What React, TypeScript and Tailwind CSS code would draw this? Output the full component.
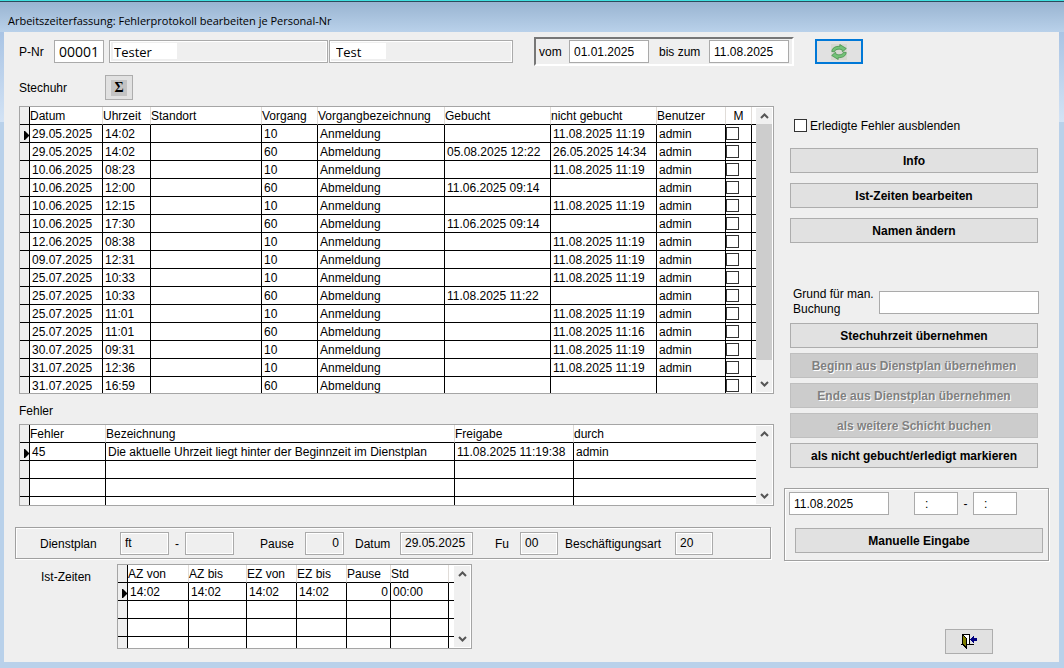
import type { ReactNode } from "react";

type Column = {
  title: string;
  width: string;
  align?: string;
};

type Cell = string | boolean;

const bookingColumns: Column[] = [
  { title: "Datum", width: "w-[73px]" },
  { title: "Uhrzeit", width: "w-[48px]" },
  { title: "Standort", width: "w-[111px]" },
  { title: "Vorgang", width: "w-[56px]" },
  { title: "Vorgangbezeichnung", width: "w-[127px]" },
  { title: "Gebucht", width: "w-[106px]" },
  { title: "nicht gebucht", width: "w-[106px]" },
  { title: "Benutzer", width: "w-[69px]" },
  { title: "M", width: "w-[26px]" },
  { title: "", width: "" },
];

// date, time, code, booked, not booked, user
const bookings = [
  ["29.05.2025", "14:02", "10", "", "11.08.2025 11:19", "admin"],
  ["29.05.2025", "14:02", "60", "05.08.2025 12:22", "26.05.2025 14:34", "admin"],
  ["10.06.2025", "08:23", "10", "", "11.08.2025 11:19", "admin"],
  ["10.06.2025", "12:00", "60", "11.06.2025 09:14", "", "admin"],
  ["10.06.2025", "12:15", "10", "", "11.08.2025 11:19", "admin"],
  ["10.06.2025", "17:30", "60", "11.06.2025 09:14", "", "admin"],
  ["12.06.2025", "08:38", "10", "", "11.08.2025 11:19", "admin"],
  ["09.07.2025", "12:31", "10", "", "11.08.2025 11:19", "admin"],
  ["25.07.2025", "10:33", "10", "", "11.08.2025 11:19", "admin"],
  ["25.07.2025", "10:33", "60", "11.08.2025 11:22", "", "admin"],
  ["25.07.2025", "11:01", "10", "", "11.08.2025 11:19", "admin"],
  ["25.07.2025", "11:01", "60", "", "11.08.2025 11:16", "admin"],
  ["30.07.2025", "09:31", "10", "", "11.08.2025 11:19", "admin"],
  ["31.07.2025", "12:36", "10", "", "11.08.2025 11:19", "admin"],
  ["31.07.2025", "16:59", "60", "", "", ""],
];

const bookingRows: Cell[][] = bookings.map(([date, time, code, booked, open, user]) => [
  date,
  time,
  "",
  code,
  code === "10" ? "Anmeldung" : "Abmeldung",
  booked,
  open,
  user,
  false,
  "",
]);

const errorColumns: Column[] = [
  { title: "Fehler", width: "w-[76px]" },
  { title: "Bezeichnung", width: "w-[349px]" },
  { title: "Freigabe", width: "w-[119px]" },
  { title: "durch", width: "" },
];

const errorRows: Cell[][] = [
  ["45", "Die aktuelle Uhrzeit liegt hinter der Beginnzeit im Dienstplan", "11.08.2025 11:19:38", "admin"],
  ["", "", "", ""],
  ["", "", "", ""],
  ["", "", "", ""],
];

const actualColumns: Column[] = [
  { title: "AZ von", width: "w-[61px]" },
  { title: "AZ bis", width: "w-[58px]" },
  { title: "EZ von", width: "w-[50px]" },
  { title: "EZ bis", width: "w-[50px]" },
  { title: "Pause", width: "w-[44px]", align: "text-right pr-[2px]" },
  { title: "Std", width: "w-[58px]" },
  { title: "", width: "" },
];

const actualRows: Cell[][] = [
  ["14:02", "14:02", "14:02", "14:02", "0", "00:00", ""],
  ["", "", "", "", "", "", ""],
  ["", "", "", "", "", "", ""],
  ["", "", "", "", "", "", ""],
];

function Chevron({ down = false }: { down?: boolean }) {
  return (
    <svg viewBox="0 0 9 6" className="w-[9px] h-[6px]" fill="none" stroke="#555" strokeWidth="2">
      <path d={down ? "M1 1 L4.5 4.5 L8 1" : "M1 5 L4.5 1.5 L8 5"} />
    </svg>
  );
}

function ScrollBar({ thumb = false }: { thumb?: boolean }) {
  return (
    <div className="flex w-[17px] shrink-0 flex-col border-y border-r border-white bg-[#f0f0f0]">
      <button type="button" aria-label="Nach oben" className="flex h-4 items-center justify-center">
        <Chevron />
      </button>
      <div className="flex-1 pb-4">{thumb && <div className="h-full bg-[#cdcdcd]" />}</div>
      <button type="button" aria-label="Nach unten" className="flex h-4 items-center justify-center">
        <Chevron down />
      </button>
    </div>
  );
}

function Grid({
  label,
  columns,
  rows,
  height,
  thumb,
}: {
  label: string;
  columns: Column[];
  rows: Cell[][];
  height: string;
  thumb?: boolean;
}) {
  return (
    <div className={`flex overflow-hidden border border-[#a5a5a5] bg-white ${height}`}>
      <table aria-label={label} className="w-full min-w-0 flex-1 table-fixed border-separate border-spacing-0 self-start leading-4">
        <thead>
          <tr>
            <th className="h-[18px] w-[10px] border-r border-b border-black bg-[#efefef] p-0" />
            {columns.map((col, i) => (
              <th
                key={i}
                className={`h-[18px] border-b border-b-black p-0 pt-px font-normal whitespace-nowrap ${col.width} ${
                  i < columns.length - 1 ? "border-r border-r-[#e0dcd8]" : ""
                } ${col.title === "M" ? "text-center" : "text-left"}`}
              >
                {col.title}
              </th>
            ))}
          </tr>
        </thead>
        <tbody>
          {rows.map((row, r) => (
            <tr key={r}>
              <td className="h-[18px] border-r border-b border-black bg-[#efefef] p-0">
                {r === 0 && (
                  <svg viewBox="0 0 5 9" className="mt-[3px] ml-auto h-[9px] w-[5px]">
                    <path d="M0 0h1l4 4v1L1 9H0z" />
                  </svg>
                )}
              </td>
              {row.map((cell, c) => (
                <td
                  key={c}
                  className={`h-[18px] border-b border-black p-0 whitespace-nowrap ${
                    c < row.length - 1 ? "border-r" : ""
                  } ${typeof cell === "string" ? "pt-px pl-[2px]" : ""} ${columns[c].align ?? ""}`}
                >
                  {typeof cell === "string" ? (
                    cell
                  ) : (
                    <input
                      type="checkbox"
                      aria-label={`M Zeile ${r + 1}`}
                      className="block size-[13px] appearance-none border border-[#333] bg-white"
                    />
                  )}
                </td>
              ))}
            </tr>
          ))}
        </tbody>
      </table>
      <ScrollBar thumb={thumb} />
    </div>
  );
}

function TextBox({ id, value, className = "", label }: { id: string; value?: string; className?: string; label?: string }) {
  return (
    <input
      id={id}
      type="text"
      aria-label={label}
      defaultValue={value}
      className={`h-[23px] shrink-0 border border-[#aaa] px-1 outline-none ${className}`}
    />
  );
}

// read-only look: grey with a thin white inner edge
const flat = "bg-[#efefef] shadow-[inset_0_0_0_1px_white]";

function PushButton({ children, disabled = false }: { children: ReactNode; disabled?: boolean }) {
  return (
    <button
      type="button"
      disabled={disabled}
      className="h-[25px] w-[248px] border border-[#adadad] bg-[#e1e1e1] pt-[2px] font-bold disabled:border-[#bfbfbf] disabled:bg-[#ccc] disabled:text-[#808080] disabled:[text-shadow:1px_1px_0_white]"
    >
      {children}
    </button>
  );
}

function RefreshIcon() {
  return (
    <svg viewBox="0 0 16 16" className="size-4 bg-[#d6d8d0]">
      <g fill="#74c277" stroke="#3c8a44" strokeWidth="0.7" strokeLinejoin="round">
        <path d="M.8 7.500C1 4 4.500 2 8.800 2.400V.5L15.300 4.500 11.500 7.800 10.800 5.600C7 4.600 4.300 5.300 3.300 7.800z" />
        <path d="M15.200 8.500C15 12 11.500 14 7.200 13.600v1.900L.7 11.500 4.500 8.200l.7 2.200c3.800 1 6.500.3 7.500-2.200z" />
      </g>
    </svg>
  );
}

function ExitIcon() {
  return (
    <svg viewBox="0 0 16 16" className="size-4" shapeRendering="crispEdges">
      <path d="M1 0h8v11H1z" fill="#000" />
      <path d="M0 10h13v1H0z" fill="#000" />
      <path d="M2 1h6v9H2z" fill="#fff" />
      <path d="M1 0l5 4v11H5l-4-4z" fill="#000" />
      <path d="M2 2l3 3v8l-3-3z" fill="#808000" />
      <path d="M9 5h1V4h1V3h1V2h1v2h3v3h-3v2h-1V8h-1V7h-1V6H9z" fill="#000080" />
    </svg>
  );
}

export default function App() {
  return (
    <div className="flex min-h-screen flex-col bg-[linear-gradient(#a9c4e4_32px,#d3e3f5_122px,#b9d1ea_122px)] font-['Liberation_Sans',Arial,sans-serif] text-[12px] leading-[15px] text-black">
      {/* TITLE BAR */}
      <header className="border-t border-[#40e0e0]">
        <div className="flex h-[31px] items-center border-t border-[#2c4a5c] bg-linear-to-b from-[#99b4d1] to-[#b9d1ea] px-2 pt-[7px]">
          <h1 className="font-['Open_Sans',sans-serif] text-[11px]">
            Arbeitszeiterfassung: Fehlerprotokoll bearbeiten je Personal-Nr
          </h1>
        </div>
      </header>

      <main className="mr-[5px] mb-[6px] ml-1 flex flex-1 flex-col bg-[#efefef] pr-[10px] pl-[11px]">
        {/* PERSON AND PERIOD */}
        <div className="mt-[5px] ml-1 flex h-[29px] items-center">
          <label htmlFor="pnr" className="w-[35px] pt-[2px]">P-Nr</label>
          <TextBox id="pnr" value="00001" className="w-[50px] bg-white font-['Open_Sans',sans-serif] text-[14px]" />
          <TextBox
            id="nachname"
            label="Nachname"
            value="Tester"
            className="ml-[5px] w-[219px] bg-[#efefef] bg-[linear-gradient(white,white)] bg-[length:64px_16px] bg-[position:3px_2px] bg-no-repeat font-['Open_Sans',sans-serif] text-[13px] shadow-[inset_0_0_0_1px_white]"
          />
          <TextBox
            id="vorname"
            label="Vorname"
            value="Test"
            className="ml-px w-[184px] bg-[#efefef] bg-[linear-gradient(white,white)] bg-[length:56px_16px] bg-[position:0px_2px] bg-no-repeat pl-[6px] font-['Open_Sans',sans-serif] text-[13px] shadow-[inset_0_0_0_1px_white]"
          />
          <div className="ml-[21px] flex h-[29px] items-center border-2 border-t-[#777] border-r-white border-b-white border-l-[#777] pr-[3px] pl-[3px]">
            <label htmlFor="vom" className="w-[30px] pt-[2px]">vom</label>
            <TextBox id="vom" value="01.01.2025" className="w-[80px] bg-white" />
            <label htmlFor="bis" className="w-[60px] pt-[2px] pl-[10px]">bis zum</label>
            <TextBox id="bis" value="11.08.2025" className="w-[80px] bg-white" />
          </div>
          <button
            type="button"
            aria-label="Aktualisieren"
            className="ml-[21px] flex h-[25px] w-12 items-center justify-center border-2 border-[#0078d7] bg-[#e1e1e1]"
          >
            <RefreshIcon />
          </button>
        </div>

        <div className="flex flex-1 gap-[10px]">
          {/* LEFT COLUMN */}
          <div className="min-w-0 flex-1">
            <div className="ml-1">
              <div className="flex items-center pt-[9px] pb-[6px]">
                <h2 className="w-[86px] pt-[2px]">Stechuhr</h2>
                <button
                  type="button"
                  aria-label="Summe"
                  className="flex h-[25px] w-7 items-center justify-center border border-[#adadad] bg-[#e1e1e1]"
                >
                  <span className="size-4 bg-[#c3c3c3] font-['Liberation_Serif',serif] text-[14px] leading-4 font-bold">Σ</span>
                </button>
              </div>
              <Grid label="Stechuhr" columns={bookingColumns} rows={bookingRows} height="h-[288px]" thumb />

              <h2 className="pt-[10px] pb-[5px]">Fehler</h2>
              <Grid label="Fehler" columns={errorColumns} rows={errorRows} height="h-[82px]" />
            </div>

            {/* ROSTER */}
            <div className="mt-[21px] mr-[3px] flex h-8 items-center border border-[#a0a0a0] pl-6 shadow-[1px_1px_0_white,inset_1px_1px_0_white]">
              <label htmlFor="dp-von" className="w-20 pt-[2px]">Dienstplan</label>
              <TextBox id="dp-von" value="ft" className={`w-[49px] ${flat}`} />
              <span className="w-4 pt-[2px] text-center">-</span>
              <TextBox id="dp-bis" label="Dienstplan bis" className={`w-[49px] ${flat}`} />
              <label htmlFor="pause" className="w-[71px] pt-[2px] pl-[26px]">Pause</label>
              <TextBox id="pause" value="0" className={`w-[39px] text-right ${flat}`} />
              <label htmlFor="datum" className="w-[56px] pt-[2px] pl-[11px]">Datum</label>
              <TextBox id="datum" value="29.05.2025" className={`w-[73px] ${flat}`} />
              <label htmlFor="fu" className="w-[47px] pt-[2px] pl-[22px]">Fu</label>
              <TextBox id="fu" value="00" className={`w-[38px] ${flat}`} />
              <label htmlFor="art" className="w-[117px] pt-[2px] pl-[7px]">Beschäftigungsart</label>
              <TextBox id="art" value="20" className={`w-[38px] ${flat}`} />
            </div>

            <div className="mt-[5px] flex pl-[26px]">
              <h2 className="w-[76px] pt-[6px]">Ist-Zeiten</h2>
              <div className="w-[355px]">
                <Grid label="Ist-Zeiten" columns={actualColumns} rows={actualRows} height="h-[85px]" />
              </div>
            </div>
          </div>

          {/* RIGHT COLUMN */}
          <div className="flex w-[265px] shrink-0 flex-col pb-2">
            <div className="mt-[51px] flex items-center gap-[3px] pl-[10px]">
              <input id="ausblenden" type="checkbox" className="size-[13px] appearance-none border border-[#333] bg-white" />
              <label htmlFor="ausblenden" className="pt-[2px]">Erledigte Fehler ausblenden</label>
            </div>

            <div className="mt-[14px] flex flex-col gap-[10px] pl-[6px]">
              <PushButton>Info</PushButton>
              <PushButton>Ist-Zeiten bearbeiten</PushButton>
              <PushButton>Namen ändern</PushButton>
            </div>

            <div className="mt-[44px] flex items-center pl-[9px]">
              <label htmlFor="grund" className="w-[86px]">
                Grund für man.
                <br />
                Buchung
              </label>
              <TextBox id="grund" className="w-[160px] bg-white" />
            </div>

            <div className="mt-[6px] flex flex-col gap-[5px] pl-[6px]">
              <PushButton>Stechuhrzeit übernehmen</PushButton>
              <PushButton disabled>Beginn aus Dienstplan übernehmen</PushButton>
              <PushButton disabled>Ende aus Dienstplan übernehmen</PushButton>
              <PushButton disabled>als weitere Schicht buchen</PushButton>
              <PushButton>als nicht gebucht/erledigt markieren</PushButton>
            </div>

            {/* MANUAL ENTRY */}
            <div className="mt-5 border border-[#a0a0a0] pt-[3px] pb-[7px] pl-1 shadow-[1px_1px_0_white,inset_1px_1px_0_white]">
              <div className="flex items-center">
                <TextBox id="man-datum" label="Datum" value="11.08.2025" className="w-[100px] bg-white" />
                <TextBox id="man-von" label="Zeit von" value=":" className="ml-[25px] w-[44px] bg-white pl-[10px]" />
                <span className="w-[15px] pt-[2px] text-center">-</span>
                <TextBox id="man-bis" label="Zeit bis" value=":" className="w-[44px] bg-white pl-[10px]" />
              </div>
              <div className="mt-[13px] pl-[6px]">
                <PushButton>Manuelle Eingabe</PushButton>
              </div>
            </div>

            <button
              type="button"
              aria-label="Schließen"
              className="mt-auto mr-[56px] flex h-[25px] w-12 items-center justify-center self-end border border-[#adadad] bg-[#e1e1e1]"
            >
              <ExitIcon />
            </button>
          </div>
        </div>
      </main>
    </div>
  );
}
